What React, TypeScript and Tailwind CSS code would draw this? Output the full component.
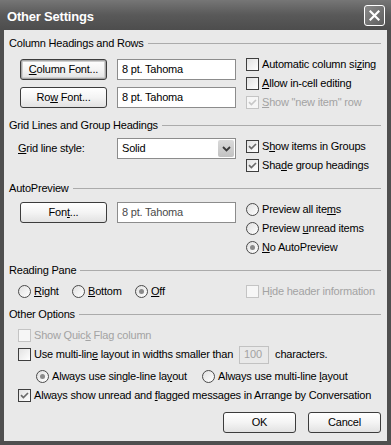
import type { ReactNode } from 'react';
import clsx from 'clsx';

function Tick({ color }: { color: string }) {
  return (
    <svg width="11" height="11" viewBox="0 0 11 11" className="block">
      <path d="M2 5.2 L4.4 7.6 L9 3" fill="none" stroke={color} strokeWidth="1.7" />
    </svg>
  );
}

function CheckBox({ checked, disabled, children }: { checked?: boolean; disabled?: boolean; children: ReactNode }) {
  return (
    <div className={clsx('flex h-[19px] items-center', disabled ? 'text-[#a3a3a3]' : 'text-black')}>
      <span
        className={clsx(
          'flex h-[13px] w-[13px] shrink-0 items-center justify-center border',
          disabled ? 'border-[#c4c4c4] bg-[#f6f6f6]' : 'border-[#3e3e3e] bg-gradient-to-br from-[#e2e2e2] to-white',
        )}
      >
        {checked && <Tick color={disabled ? '#c8c8c8' : '#6b6b6b'} />}
      </span>
      <span className="ml-[3px] whitespace-nowrap">{children}</span>
    </div>
  );
}

function Radio({ checked, children }: { checked?: boolean; children: ReactNode }) {
  return (
    <div className="flex h-[19px] items-center text-black">
      <span className="flex h-[13px] w-[13px] shrink-0 items-center justify-center rounded-full border border-[#4a4a4a] bg-gradient-to-br from-[#e0e0e0] to-white">
        {checked && <span className="h-[5px] w-[5px] rounded-full bg-[#8a8a8a]" />}
      </span>
      <span className="ml-[3px] whitespace-nowrap">{children}</span>
    </div>
  );
}

function Btn({ children, focused, className }: { children: ReactNode; focused?: boolean; className?: string }) {
  return (
    <div
      className={clsx(
        'flex h-[21px] items-center justify-center rounded-[3px] border border-[#3c3c3c] bg-gradient-to-b from-white via-[#f4f4f4] to-[#e2e2e2] text-black',
        focused && 'shadow-[inset_0_0_0_1px_#a8a8a8,inset_0_0_0_2px_#d0d0d0]',
      )}
    >
      <span className={className}>{children}</span>
    </div>
  );
}

function Field({ value, muted }: { value: string; muted?: boolean }) {
  return (
    <div
      className={clsx(
        'flex h-[21px] w-[119px] items-center border border-[#8c8c8c] bg-white pl-[4px]',
        muted ? 'text-[#4a4a4a]' : 'text-black',
      )}
    >
      {value}
    </div>
  );
}

function GroupHeader({ title }: { title: string }) {
  return (
    <div className="mt-[6px] flex h-[14px] items-center text-black">
      <span className="whitespace-nowrap">{title}</span>
      <span className="ml-[4px] h-px flex-1 bg-[#ababab]" />
    </div>
  );
}

export default function App() {
  return (
    <div className="flex h-[445px] w-[391px] flex-col bg-[#4f4f4f] text-[11px] leading-[13px] tracking-[-0.2px] [font-family:'Liberation_Sans',Arial,sans-serif]">
      {/* title bar */}
      <div className="flex h-[30px] shrink-0 items-center justify-between bg-gradient-to-b from-[#767676] via-[#595959] to-[#4d4d4d] pl-[7px] pr-[6px]">
        <span className="pt-[2px] text-[13px] font-bold text-white">Other Settings</span>
        <div className="flex h-[21px] w-[21px] items-center justify-center rounded-[3px] border border-white bg-gradient-to-br from-[#8a8a8a] to-[#5e5e5e]">
          <svg width="11" height="11" viewBox="0 0 11 11">
            <path d="M1.5 1.5 L9.5 9.5 M9.5 1.5 L1.5 9.5" stroke="white" strokeWidth="2.2" strokeLinecap="square" />
          </svg>
        </div>
      </div>

      {/* body */}
      <div className="mx-[4px] flex h-[411px] flex-col bg-[#e9e9e9] pl-[5px] pr-[6px]">
        <GroupHeader title="Column Headings and Rows" />
        <div className="mt-[5px] flex">
          <div className="flex flex-col gap-[7px] pt-[4px]">
            <div className="ml-[11px] flex gap-[10px]">
              <div className="w-[87px]">
                <Btn focused>
                  <u>C</u>olumn Font...
                </Btn>
              </div>
              <Field value="8 pt. Tahoma" />
            </div>
            <div className="ml-[11px] flex gap-[10px]">
              <div className="w-[87px]">
                <Btn>
                  Ro<u>w</u> Font...
                </Btn>
              </div>
              <Field value="8 pt. Tahoma" />
            </div>
          </div>
          <div className="ml-[10px] flex flex-col">
            <CheckBox>
              Automatic column si<u>z</u>ing
            </CheckBox>
            <CheckBox>
              <u>A</u>llow in-cell editing
            </CheckBox>
            <CheckBox checked disabled>
              <u>S</u>how "new item" row
            </CheckBox>
          </div>
        </div>

        <GroupHeader title="Grid Lines and Group Headings" />
        <div className="flex">
          <div className="flex pt-[6px]">
            <div className="flex h-[21px] w-[108px] items-center pl-[9px] text-black">
              <u>G</u>rid line style:
            </div>
            <div className="flex h-[21px] w-[119px] items-center justify-between border border-[#8c8c8c] bg-white pl-[4px] pr-[1px] text-black">
              <span>Solid</span>
              <span className="flex h-[17px] w-[16px] items-center justify-center rounded-[2px] bg-gradient-to-b from-[#dadada] to-[#c2c2c2]">
                <svg width="9" height="6" viewBox="0 0 9 6">
                  <path d="M1 1 L4.5 4.5 L8 1" fill="none" stroke="#3a3a3a" strokeWidth="1.8" />
                </svg>
              </span>
            </div>
          </div>
          <div className="ml-[10px] flex flex-col pt-[5px]">
            <CheckBox checked>
              S<u>h</u>ow items in Groups
            </CheckBox>
            <CheckBox checked>
              Sha<u>d</u>e group headings
            </CheckBox>
          </div>
        </div>

        <GroupHeader title="AutoPreview" />
        <div className="flex">
          <div className="ml-[11px] flex gap-[10px] pt-[7px]">
            <div className="w-[87px]">
              <Btn>
                Fon<u>t</u>...
              </Btn>
            </div>
            <Field value="8 pt. Tahoma" muted />
          </div>
          <div className="ml-[10px] flex flex-col pt-[5px]">
            <Radio>
              Preview all ite<u>m</u>s
            </Radio>
            <Radio>
              Preview <u>u</u>nread items
            </Radio>
            <Radio checked>
              <u>N</u>o AutoPreview
            </Radio>
          </div>
        </div>

        <GroupHeader title="Reading Pane" />
        <div className="mt-[5px] flex pl-[9px]">
          <div className="w-[54px]">
            <Radio>
              <u>R</u>ight
            </Radio>
          </div>
          <div className="w-[63px]">
            <Radio>
              <u>B</u>ottom
            </Radio>
          </div>
          <div className="w-[111px]">
            <Radio checked>
              <u>O</u>ff
            </Radio>
          </div>
          <CheckBox disabled>
            H<u>i</u>de header information
          </CheckBox>
        </div>

        <GroupHeader title="Other Options" />
        <div className="mt-[5px] pl-[9px]">
          <CheckBox disabled>
            Show Quic<u>k</u> Flag column
          </CheckBox>
          <div className="flex h-[19px] items-center">
            <CheckBox>
              Use multi-lin<u>e</u> layout in widths smaller than
            </CheckBox>
            <div className="ml-[6px] flex h-[18px] w-[30px] items-center border border-[#c2c2c2] pl-[4px] text-[#a3a3a3]">
              100
            </div>
            <span className="ml-[6px] text-black">characters.</span>
          </div>
          <div className="mt-[3px] flex pl-[18px]">
            <div className="w-[166px]">
              <Radio checked>
                Always use single-line la<u>y</u>out
              </Radio>
            </div>
            <Radio>
              Always use multi-line <u>l</u>ayout
            </Radio>
          </div>
          <CheckBox checked>
            Always show unread and <u>f</u>lagged messages in Arrange by Conversation
          </CheckBox>
        </div>

        <div className="mt-[7px] flex justify-end gap-[12px]">
          <div className="w-[73px]">
            <Btn>OK</Btn>
          </div>
          <div className="w-[73px]">
            <Btn>Cancel</Btn>
          </div>
        </div>
      </div>
    </div>
  );
}
